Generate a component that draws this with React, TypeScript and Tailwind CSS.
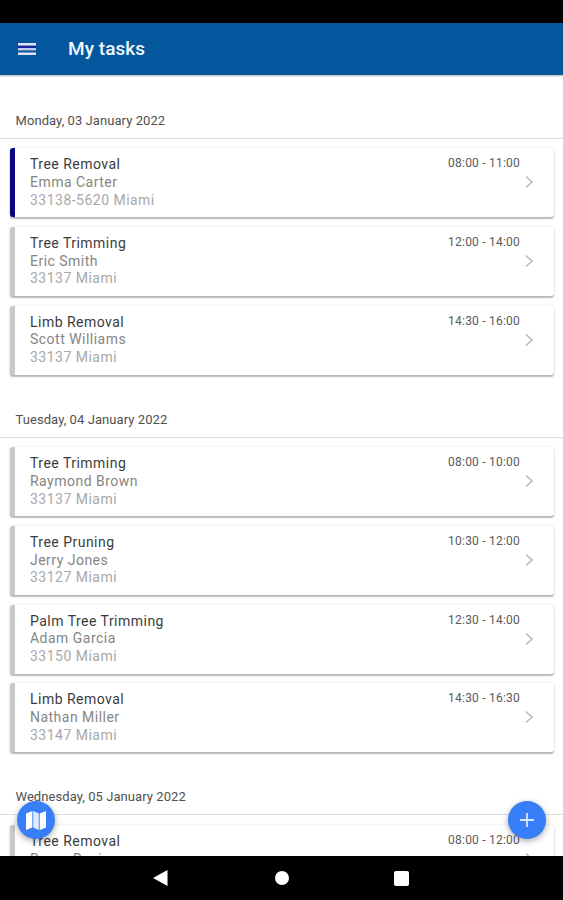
import React from "react"

type Task = {
  title: string
  client: string
  address: string
  time: string
  active?: boolean
}

type Day = {
  date: string
  tasks: Task[]
}

const days: Day[] = [
  {
    date: "Monday, 03 January 2022",
    tasks: [
      {
        title: "Tree Removal",
        client: "Emma Carter",
        address: "33138-5620 Miami",
        time: "08:00 - 11:00",
        active: true,
      },
      { title: "Tree Trimming", client: "Eric Smith", address: "33137 Miami", time: "12:00 - 14:00" },
      { title: "Limb Removal", client: "Scott Williams", address: "33137 Miami", time: "14:30 - 16:00" },
    ],
  },
  {
    date: "Tuesday, 04 January 2022",
    tasks: [
      { title: "Tree Trimming", client: "Raymond Brown", address: "33137 Miami", time: "08:00 - 10:00" },
      { title: "Tree Pruning", client: "Jerry Jones", address: "33127 Miami", time: "10:30 - 12:00" },
      { title: "Palm Tree Trimming", client: "Adam Garcia", address: "33150 Miami", time: "12:30 - 14:00" },
      { title: "Limb Removal", client: "Nathan Miller", address: "33147 Miami", time: "14:30 - 16:30" },
    ],
  },
  {
    date: "Wednesday, 05 January 2022",
    tasks: [{ title: "Tree Removal", client: "Roger Davis", address: "33137 Miami", time: "08:00 - 12:00" }],
  },
]

function TaskCard({ task }: { task: Task }) {
  return (
    <div
      className={`mb-[9.75px] ml-2.5 mr-[9px] flex h-[69px] rounded-[3px] border-l-[5px] bg-white pl-[15px] pr-5 pt-2 shadow-[0_1.5px_1.5px_rgba(0,0,0,0.26),0_0_3px_rgba(0,0,0,0.1)] ${
        task.active ? "border-[#090780]" : "border-[#c9c9c9]"
      }`}
    >
      <div className="flex-1 text-[14px] leading-[17.8px] tracking-[0.48px]">
        <p className="text-[#3c3c3c]">{task.title}</p>
        <p className="text-[#858585]">{task.client}</p>
        <p className="text-[#a8a8a8]">{task.address}</p>
      </div>
      <span className="-mt-px text-[12px] leading-[16px] tracking-[0.22px] text-[#5a5a5a]">{task.time}</span>
      <svg
        className="ml-[5px] mt-[19px] h-[14px] w-[9px]"
        viewBox="0 0 9 14"
        fill="none"
        stroke="#b8b8b8"
        strokeWidth="1.6"
      >
        <path d="M1 1.5 7 7 1 12.5" />
      </svg>
    </div>
  )
}

export default function App() {
  return (
    <div className="relative flex h-[900px] w-full flex-col overflow-hidden bg-white font-['Roboto',sans-serif]">
      {/* status bar */}
      <div className="h-[23px] shrink-0 bg-black" />

      {/* app bar */}
      <header className="z-10 flex h-[52px] shrink-0 items-center bg-[#04579d] pl-[18px] shadow-[0_1px_2px_rgba(0,0,0,0.3)]">
        <svg className="h-3 w-[18px]" viewBox="0 0 18 12">
          <path d="M0 3h18v2H0z" fill="#2222a0" />
          <path d="M0 0h18v2.6H0zM0 9.6h18V12H0z" fill="#e2e4f6" />
          <path d="M0 5h18v2.4H0z" fill="#c3cbea" />
        </svg>
        <h1 className="ml-8 text-[19px] font-medium tracking-[0.05px] text-[#f2f7ff]">My tasks</h1>
      </header>

      {/* task list */}
      <main className="min-h-0 flex-1 overflow-hidden pt-px">
        {days.map((day) => (
          <section key={day.date}>
            <h2 className="mb-[9.5px] flex h-[62.5px] items-end border-b border-[#dedede] pb-[9px] pl-[15.5px] text-[13px] leading-[16px] tracking-[0.07px] text-[#505050]">
              {day.date}
            </h2>
            <div className="-mb-[9.25px]">
              {day.tasks.map((task) => (
                <TaskCard key={task.time} task={task} />
              ))}
            </div>
          </section>
        ))}
      </main>

      {/* floating buttons */}
      <button className="absolute left-[17px] top-[801px] flex size-[38px] items-center justify-center rounded-full bg-[#377ef8] shadow-[0_2px_6px_rgba(0,0,0,0.35)]">
        <svg className="h-[19px] w-5" viewBox="0 0 20 19">
          <path d="M0 2.5 6.3 0v16.5L0 19zM13.7 2.5 20 0v16.5L13.7 19z" fill="#fff" />
          <path d="M7.2 0 12.8 2.5V19l-5.6-2.5z" fill="#dfe9ff" />
        </svg>
      </button>
      <button className="absolute left-[508px] top-[801px] flex size-[38px] items-center justify-center rounded-full bg-[#377ef8] shadow-[0_2px_6px_rgba(0,0,0,0.35)]">
        <svg className="size-[14px]" viewBox="0 0 14 14" stroke="#d9e6ff" strokeWidth="1.8">
          <path d="M7 0v14M0 7h14" />
        </svg>
      </button>

      {/* navigation bar */}
      <nav className="flex h-11 shrink-0 items-center bg-black pl-[153px]">
        <svg className="h-4 w-[15px]" viewBox="0 0 15 16" fill="#fff">
          <path d="M0 8 14.5 0v16z" />
        </svg>
        <div className="ml-[107px] size-[14px] rounded-full bg-white" />
        <div className="ml-[105px] size-[15px] rounded-xs bg-white" />
      </nav>
    </div>
  )
}
